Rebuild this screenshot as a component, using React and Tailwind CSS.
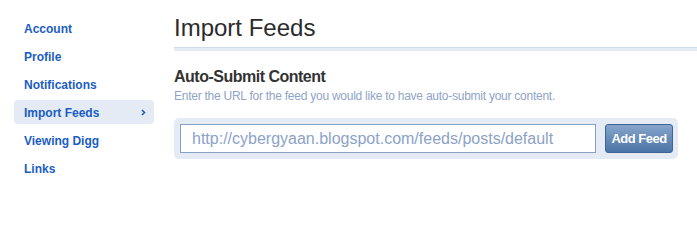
const links = [
  "Account",
  "Profile",
  "Notifications",
  "Import Feeds",
  "Viewing Digg",
  "Links",
];

function Sidebar() {
  return (
    <ul className="w-[140px] shrink-0 mt-4 flex flex-col gap-1">
      {links.map((link) => {
        const active = link === "Import Feeds";
        return (
          <li
            key={link}
            className={`h-6 pt-[2px] pl-[10px] pr-[8px] flex items-center justify-between rounded-[4px] text-[12px] font-bold text-[#1b5dc2] leading-5 ${
              active ? "bg-[#e4ebf4]" : ""
            }`}
          >
            <span>{link}</span>
            {active && (
              <svg width="5" height="7" viewBox="0 0 5 7" className="mb-[2px]">
                <polyline
                  points="1,1 3.5,3.5 1,6"
                  fill="none"
                  stroke="#1b5dc2"
                  strokeWidth="1.6"
                />
              </svg>
            )}
          </li>
        );
      })}
    </ul>
  );
}

export default function App() {
  return (
    <div
      className="w-[697px] h-[203px] bg-white flex pl-[14px] gap-5 overflow-hidden"
      style={{ fontFamily: '"Liberation Sans", Arial, sans-serif' }}
    >
      <Sidebar />

      <div className="flex-1">
        {/* Title */}
        <h1 className="mt-[14px] text-[24px] leading-[28px] text-[#2b2b2b]">
          Import Feeds
        </h1>
        <div className="mt-[5px] h-1 border-t border-[#cfdbeb] bg-[#e4ebf5]" />

        {/* Auto submit */}
        <h2 className="mt-[17px] text-[16px] leading-[18px] font-bold text-[#333] tracking-[-0.5px]">
          Auto-Submit Content
        </h2>
        <p className="mt-[2px] text-[12px] leading-4 text-[#8fa4c8] tracking-[-0.25px]">
          Enter the URL for the feed you would like to have auto-submit your content.
        </p>

        <div className="mt-[14px] w-[504px] h-[41px] bg-[#e4ebf4] rounded-[5px] pt-[6px] pl-[6px] flex items-start">
          <input
            type="text"
            defaultValue="http://cybergyaan.blogspot.com/feeds/posts/default"
            className="w-[416px] h-[29px] bg-white border border-[#86a0c6] pl-[11px] text-[16px] text-[#8ca2c8] outline-none"
          />
          <button className="ml-[9px] w-[68px] h-[29px] rounded-[3px] border border-[#3e6496] bg-gradient-to-b from-[#86a5cb] to-[#4b74a6] text-white text-[13px] font-bold tracking-[-0.5px]">
            Add Feed
          </button>
        </div>
      </div>
    </div>
  );
}
